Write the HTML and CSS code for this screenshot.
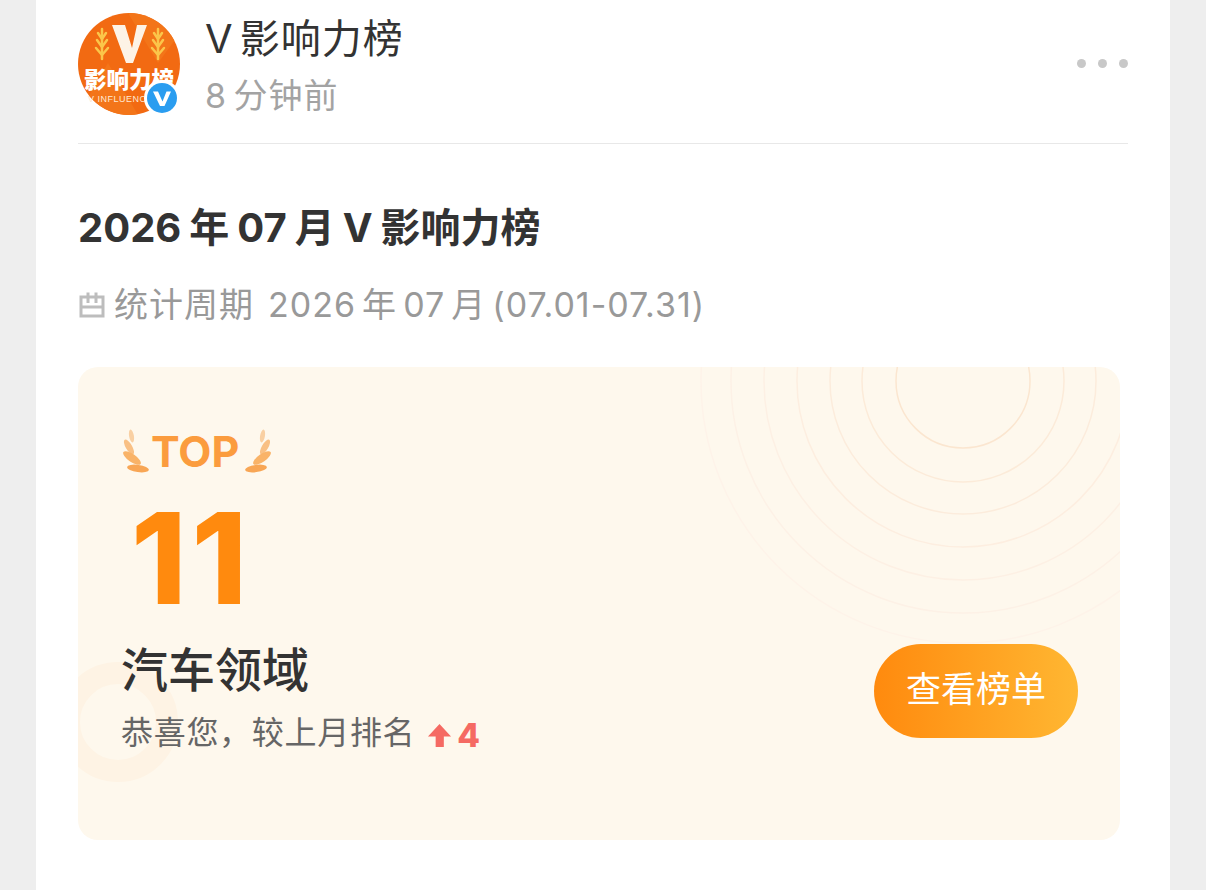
FILE: index.html
```html
<!DOCTYPE html>
<html>
  <head>
    <meta charset="utf-8" />
    <title>V影响力榜</title>
    <link rel="stylesheet" href="styles.css">
  </head>
  <body>
    <div class="post">
      <div class="head">
        <div class="avatar">
          <svg viewBox="0 0 102 102" width="102" height="102">
            <defs>
              <clipPath id="avatarClip"><circle cx="51" cy="51" r="51"/></clipPath>
            </defs>
            <g clip-path="url(#avatarClip)">
              <rect width="102" height="102" fill="#f26a12"/>
              <path d="M0 102L30 50L60 102ZM50 0L80 50L102 20V0Z" fill="#f37519"/>
              <path d="M34 12H47L54 35L59 12H69L55 50H48Z" fill="#fdf3e6"/>
              <g fill="none" stroke="#fbc64a" stroke-width="2.5" stroke-linecap="round">
                <path d="M24 16V46"/>
                <path d="M24 26L20 20M24 26L28 20M24 34L19 27M24 34L29 27M24 42L18 35M24 42L30 35"/>
                <path d="M80 16V46"/>
                <path d="M80 26L76 20M80 26L84 20M80 34L75 27M80 34L85 27M80 42L74 35M80 42L86 35"/>
              </g>
            </g>
            <text x="6" y="75" textLength="90" lengthAdjust="spacingAndGlyphs" class="avatar-name">影响力榜</text>
            <text x="10" y="89" class="avatar-en">V INFLUENCE</text>
          </svg>
          <svg class="badge" viewBox="0 0 36 36" width="36" height="36">
            <circle cx="18" cy="18" r="18" fill="#fff"/>
            <circle cx="18" cy="18" r="15" fill="#2a9df0"/>
            <path d="M9 11.5H14L18.5 21.5L22.5 11.5H27L20.5 26H16Z" fill="#fff"/>
          </svg>
        </div>
        <div class="who">
          <div class="name">V 影响力榜</div>
          <div class="time">8 分钟前</div>
        </div>
        <div class="more"><i></i><i></i><i></i></div>
      </div>

      <h1 class="title">2026 年 07 月 V 影响力榜</h1>
      <div class="period">
        <svg viewBox="0 0 28 28" width="28" height="28">
          <path d="M3 6H25V25H3ZM3 16H25M10 1.5V12M18 1.5V12" fill="none" stroke="#bdbdbd" stroke-width="3"/>
        </svg>
        <span class="period-label">统计周期</span>
        <span class="period-date">2026 年 07 月 (07.01-07.31)</span>
      </div>

      <div class="rank-card">
        <svg class="rings" viewBox="0 0 1042 473" width="1042" height="473">
          <g fill="none" stroke-width="1.5">
            <circle cx="885" cy="14" r="67" stroke="#fbe6d0"/>
            <circle cx="885" cy="14" r="101" stroke="#fcebd9"/>
            <circle cx="885" cy="14" r="133" stroke="#fcecdc"/>
            <circle cx="885" cy="14" r="166" stroke="#fdeee0"/>
            <circle cx="885" cy="14" r="199" stroke="#fdf0e4"/>
            <circle cx="885" cy="14" r="232" stroke="#fdf1e6"/>
            <circle cx="885" cy="14" r="262" stroke="#fef3e9"/>
          </g>
          <circle cx="40" cy="355" r="49" fill="none" stroke="#fef3e4" stroke-width="22"/>
        </svg>
        <div class="rank-info">
          <div class="top">
            <svg viewBox="0 0 28 44" width="28" height="44">
              <ellipse cx="8.5" cy="7" rx="2.4" ry="6.5" transform="rotate(-10 8.5 7)" fill="#f9d0a3"/>
              <ellipse cx="6" cy="18" rx="3.2" ry="8.5" transform="rotate(-30 6 18)" fill="#f9c084"/>
              <ellipse cx="9" cy="29" rx="4" ry="10.5" transform="rotate(-55 9 29)" fill="#f9b368"/>
              <ellipse cx="15" cy="39.5" rx="11" ry="3.6" transform="rotate(8 15 39.5)" fill="#f8a655"/>
            </svg>
            <span>TOP</span>
            <svg viewBox="0 0 28 44" width="28" height="44" class="flip">
              <ellipse cx="8.5" cy="7" rx="2.4" ry="6.5" transform="rotate(-10 8.5 7)" fill="#f9d0a3"/>
              <ellipse cx="6" cy="18" rx="3.2" ry="8.5" transform="rotate(-30 6 18)" fill="#f9c084"/>
              <ellipse cx="9" cy="29" rx="4" ry="10.5" transform="rotate(-55 9 29)" fill="#f9b368"/>
              <ellipse cx="15" cy="39.5" rx="11" ry="3.6" transform="rotate(8 15 39.5)" fill="#f8a655"/>
            </svg>
          </div>
          <div class="rank-num">11</div>
          <div class="field">汽车领域</div>
          <div class="change">
            <span>恭喜您，较上月排名</span>
            <svg viewBox="0 0 26 26" width="25" height="25">
              <path d="M13 1L25 14H17.5V25H9V14H1Z" fill="#f56a63"/>
            </svg>
            <b>4</b>
          </div>
        </div>
        <div class="view-btn">查看榜单</div>
      </div>
    </div>
  </body>
</html>
```

FILE: styles.css
```css
html {
  margin: 0px;
  padding: 0px;
}
body {
  font-family: "Inter", "Noto Sans CJK SC", sans-serif;
  margin: 0px;
  padding: 0px;
  background-color: #eeeeee;
  color: #333;
}
.post {
  width: 1050px;
  height: 890px;
  margin-left: 36px;
  padding: 13px 42px 0px 42px;
  background-color: #fff;
  overflow: hidden;
}
.head {
  display: flex;
  height: 130px;
  border-bottom: 1px solid #e8e8e8;
}
.avatar {
  position: relative;
  width: 102px;
  height: 102px;
  flex: none;
}
.avatar-name {
  font-size: 23px;
  font-weight: 900;
  fill: #fff;
}
.avatar-en {
  font-family: "Liberation Sans", sans-serif;
  font-size: 9px;
  fill: #ffe9d2;
  letter-spacing: 0.5px;
}
.badge {
  position: absolute;
  right: 0px;
  bottom: -1px;
}
.who {
  margin-left: 25px;
  flex: 1;
}
.name {
  font-size: 40px;
  line-height: 52px;
  letter-spacing: 1px;
  word-spacing: -6px;
  color: #333;
}
.time {
  font-size: 34px;
  line-height: 48px;
  letter-spacing: 1px;
  word-spacing: -4px;
  margin-top: 7px;
  color: #a3a3a3;
}
.more {
  display: flex;
  gap: 12px;
  margin-top: 46px;
}
.more i {
  display: block;
  width: 9px;
  height: 9px;
  border-radius: 50%;
  background-color: #c8c8c8;
}
.title {
  font-size: 40px;
  line-height: 54px;
  font-weight: 700;
  word-spacing: -1.5px;
  margin: 57px 0px 0px 0px;
  color: #333;
}
.period {
  display: flex;
  align-items: center;
  gap: 8px;
  margin-top: 26px;
  font-size: 34px;
  line-height: 48px;
  letter-spacing: 1px;
  color: #999;
}
.period-label {
  margin-right: 6px;
}
.period-date {
  word-spacing: -4.5px;
}
.rank-card {
  position: relative;
  display: flex;
  justify-content: space-between;
  width: 1042px;
  height: 473px;
  box-sizing: border-box;
  margin-top: 38px;
  padding: 59px 42px 0px 45px;
  border-radius: 20px;
  background-color: #fef8ed;
  overflow: hidden;
}
.rings {
  position: absolute;
  left: 0px;
  top: 0px;
}
.rank-info {
  position: relative;
}
.top {
  display: flex;
  align-items: center;
  gap: 0px;
  height: 50px;
  color: #fb9c3e;
  font-size: 43px;
  font-weight: 700;
}
.flip {
  transform: scaleX(-1);
  margin-left: 4px;
}
.rank-num {
  font-size: 126px;
  font-weight: 800;
  line-height: 128px;
  letter-spacing: 5px;
  margin-top: 18px;
  margin-left: 8px;
  color: #ff8a0e;
}
.field {
  font-size: 47px;
  line-height: 60px;
  font-weight: 500;
  margin-top: 18px;
  margin-left: -2px;
  color: #333;
}
.change {
  display: flex;
  align-items: center;
  margin-top: 9px;
  margin-left: -2px;
  font-size: 32px;
  line-height: 44px;
  letter-spacing: 0.7px;
  color: #666;
}
.change svg {
  margin-left: 12px;
  margin-top: 5px;
}
.change b {
  font-size: 33px;
  font-weight: 800;
  margin-left: 5px;
  margin-top: 4px;
  color: #f56a63;
}
.view-btn {
  position: relative;
  width: 204px;
  height: 94px;
  margin-top: 218px;
  border-radius: 47px;
  background: linear-gradient(90deg, #ff8a0e, #ffb732);
  color: #fff;
  font-size: 35px;
  line-height: 90px;
  text-align: center;
}
```
